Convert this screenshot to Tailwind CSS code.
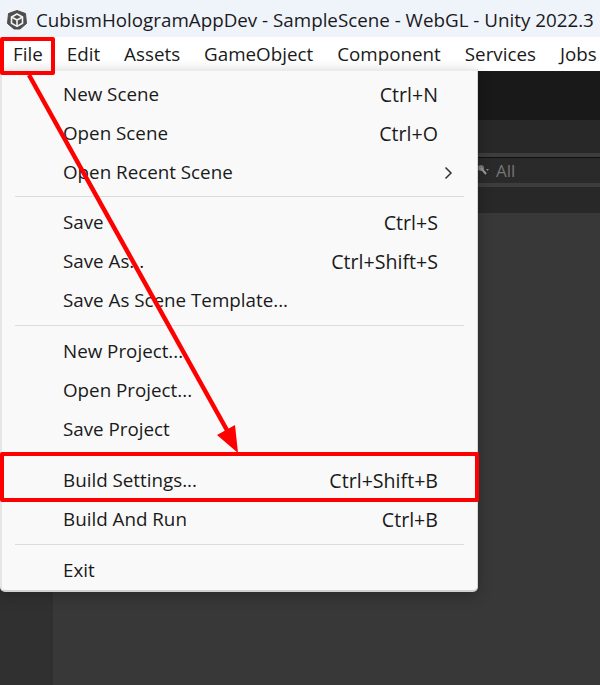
<!DOCTYPE html>
<html lang="en">
<head>
    <meta charset="UTF-8">
    <title>Unity File menu</title>
    <script src="https://cdn.jsdelivr.net/npm/@tailwindcss/browser@4"></script>
</head>
<body class="w-[600px] h-[685px] overflow-hidden relative bg-[#383838] text-[#1a1a1a] font-['Open_Sans','Noto_Sans',sans-serif] text-[18.8px]">

    <!-- title bar -->
    <div class="h-[37px] bg-[#eff3fa] flex items-center pl-[7px] pt-[3px] gap-[9px] whitespace-nowrap overflow-hidden">
        <svg class="w-[20px] h-[20px] shrink-0" viewBox="0 0 20 20">
            <path d="M10 0.5 L18.5 3.5 L19.5 13.5 L13 19 H7 L0.5 13.5 L1.5 3.5 Z" fill="#4d4d4d" stroke="#4d4d4d" stroke-linejoin="round"/>
            <path d="M10 4 L15.5 7 V13.3 L10 16.4 L4.5 13.3 V7 Z" fill="none" stroke="#f2f2f2" stroke-width="1.6" stroke-linejoin="round"/>
            <path d="M10 10 V16 M10 10 L4.8 7.2 M10 10 L15.2 7.2" stroke="#f2f2f2" stroke-width="1.6" fill="none"/>
        </svg>
        <span>CubismHologramAppDev - SampleScene - WebGL - Unity 2022.3</span>
    </div>

    <!-- menu bar -->
    <div class="h-[34px] bg-white flex items-center whitespace-nowrap overflow-hidden pl-[13px] gap-[24px]">
        <span>File</span>
        <span>Edit</span>
        <span>Assets</span>
        <span>GameObject</span>
        <span>Component</span>
        <span>Services</span>
        <span>Jobs</span>
    </div>

    <!-- dark editor behind the menu -->
    <div class="flex flex-col h-[614px]">
        <div class="h-[49px] bg-[#191919]"></div>
        <div class="h-[33px] bg-[#282828]"></div>
        <div class="h-[4px] bg-[#3d3d3d]"></div>
        <div class="h-[26px] bg-[#2a2a2a] border-t border-[#111] flex items-center pl-[478px] gap-[7px] text-[#757575] text-[17px]">
            <svg class="w-[11px] h-[12px]" viewBox="0 0 11 12"><circle cx="3" cy="3" r="3" fill="#777"/><path d="M3 3 L8 9" stroke="#999" stroke-width="2"/><path d="M8 4 L11 4 L9.5 6 Z" fill="#888"/></svg>
            <span>All</span>
        </div>
        <div class="h-[4px] bg-[#3d3d3d]"></div>
        <div class="h-[26px] bg-[#282828]"></div>
        <div class="flex-1 bg-[#383838] flex">
            <div class="w-[53px] bg-[#303030]"></div>
        </div>
    </div>

    <!-- File menu -->
    <div class="absolute left-0 top-[69px] w-[478px] h-[523px] bg-[#f9f9f9] rounded-b-[5px] border-t-2 border-t-[#ececec] border-l-2 border-l-[#e6e6e6] border-r border-r-[#d5d5d5] border-b-2 border-b-[#d0d0d0] shadow-[0_4px_14px_rgba(0,0,0,0.25)] pt-[4px]">
        <div class="h-[39px] flex items-center justify-between pl-[61px] pr-[39px]"><span>New Scene</span><span class="text-[19.6px]">Ctrl+N</span></div>
        <div class="h-[39px] flex items-center justify-between pl-[61px] pr-[39px]"><span>Open Scene</span><span class="text-[19.6px]">Ctrl+O</span></div>
        <div class="h-[39px] flex items-center justify-between pl-[61px] pr-[24px]">
            <span>Open Recent Scene</span>
            <svg class="w-[9px] h-[14px]" viewBox="0 0 9 14"><path d="M1.5 1.5 L7 7 L1.5 12.5" fill="none" stroke="#333" stroke-width="1.5"/></svg>
        </div>
        <div class="h-px bg-[#dcdcdc] ml-[13px] mr-[13px] mt-[4px] mb-[6px]"></div>
        <div class="h-[39px] flex items-center justify-between pl-[61px] pr-[39px]"><span>Save</span><span class="text-[19.6px]">Ctrl+S</span></div>
        <div class="h-[39px] flex items-center justify-between pl-[61px] pr-[39px]"><span>Save As...</span><span class="text-[19.6px]">Ctrl+Shift+S</span></div>
        <div class="h-[39px] flex items-center justify-between pl-[61px] pr-[39px]"><span>Save As Scene Template...</span></div>
        <div class="h-px bg-[#dcdcdc] ml-[13px] mr-[13px] mt-[5px] mb-[6px]"></div>
        <div class="h-[39px] flex items-center justify-between pl-[61px] pr-[39px]"><span>New Project...</span></div>
        <div class="h-[39px] flex items-center justify-between pl-[61px] pr-[39px]"><span>Open Project...</span></div>
        <div class="h-[39px] flex items-center justify-between pl-[61px] pr-[39px]"><span>Save Project</span></div>
        <div class="h-[39px] mt-[12px] flex items-center justify-between pl-[61px] pr-[39px]"><span>Build Settings...</span><span class="text-[19.6px]">Ctrl+Shift+B</span></div>
        <div class="h-[39px] flex items-center justify-between pl-[61px] pr-[39px]"><span>Build And Run</span><span class="text-[19.6px]">Ctrl+B</span></div>
        <div class="h-px bg-[#dcdcdc] ml-[13px] mr-[13px] mt-[5px] mb-[6px]"></div>
        <div class="h-[39px] flex items-center justify-between pl-[61px] pr-[39px]"><span>Exit</span></div>
    </div>

    <!-- red annotations -->
    <div class="absolute left-0 top-[37px] w-[55px] h-[38px] border-[4px] border-[#ff0000] rounded-[2px]"></div>
    <div class="absolute left-0 top-[452px] w-[479px] h-[50px] border-[4px] border-[#ff0000] rounded-[2px]"></div>
    <svg class="absolute left-0 top-0 pointer-events-none" width="600" height="685" viewBox="0 0 600 685">
        <line x1="29" y1="75" x2="228" y2="432" stroke="#ff0000" stroke-width="4.5"/>
        <polygon points="238,453 217,435 235,425" fill="#ff0000"/>
    </svg>
</body>
</html>
